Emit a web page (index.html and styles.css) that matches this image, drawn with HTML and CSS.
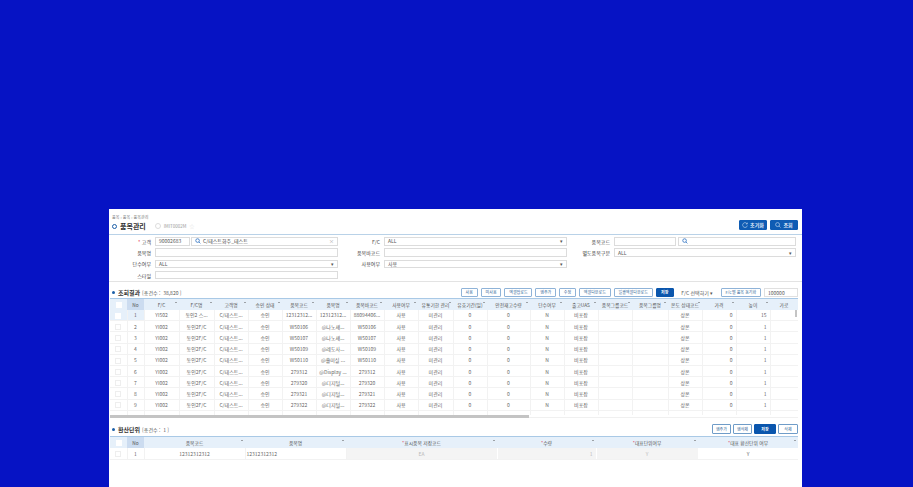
FILE: index.html
```html
<!DOCTYPE html>
<html lang="ko">
<head>
  <meta charset="UTF-8" />
  <title>품목관리</title>
  <link rel="stylesheet" href="styles.css">
</head>
<body>
  <main class="panel">

    <header class="page-head">
      <div>
        <div class="crumb">품목 › 품목 › 품목관리</div>
        <h1 class="page-title"><span class="ring"></span>품목관리<span class="clock"></span><span class="page-code">IMIT0002M</span><span class="star">☆</span></h1>
      </div>
      <div class="head-btns">
        <button class="btn-blue reset">
          <svg width="6" height="6" viewBox="0 0 10 10"><path d="M8.500 3A4 4 0 1 0 9 6M8.800 1v2.300H6.500" fill="none" stroke="#cfe0f5" stroke-width="1"/></svg>
          초기화
        </button>
        <button class="btn-blue">
          <svg width="6" height="6" viewBox="0 0 10 10"><circle cx="4.300" cy="4.300" r="3.300" fill="none" stroke="#cfe0f5" stroke-width="1"/><path d="M6.800 6.800L9.300 9.300" stroke="#cfe0f5" stroke-width="1"/></svg>
          조회
        </button>
      </div>
    </header>

    <section class="search">
      <div class="search-col">
        <div class="field">
          <label><em>*</em> 고객</label>
          <div class="split">
            <span class="input code">90002683</span>
            <span class="input grow">
              <svg width="6" height="6" viewBox="0 0 10 10"><circle cx="4.300" cy="4.300" r="3" fill="none" stroke="#2b6fc0" stroke-width="1.300"/><path d="M6.600 6.600L9 9" stroke="#2b6fc0" stroke-width="1.300"/></svg>
              <b>C/테스트화주_테스트</b><i class="clear">×</i>
            </span>
          </div>
        </div>
        <div class="field"><label>품목명</label><span class="input"></span></div>
        <div class="field"><label>단수여부</label><span class="input select">ALL</span></div>
        <div class="field"><label>스타일</label><span class="input"></span></div>
      </div>
      <div class="search-col mid">
        <div class="field"><label>F/C</label><span class="input select">ALL</span></div>
        <div class="field"><label>품목바코드</label><span class="input"></span></div>
        <div class="field"><label>사용여부</label><span class="input select">사용</span></div>
      </div>
      <div class="search-col last">
        <div class="field">
          <label>품목코드</label>
          <div class="split wide">
            <span class="input"></span>
            <span class="input">
              <svg width="6" height="6" viewBox="0 0 10 10"><circle cx="4.300" cy="4.300" r="3" fill="none" stroke="#2b6fc0" stroke-width="1.300"/><path d="M6.600 6.600L9 9" stroke="#2b6fc0" stroke-width="1.300"/></svg>
            </span>
          </div>
        </div>
        <div class="field"><label>별도품목구분</label><span class="input select">ALL</span></div>
      </div>
    </section>

    <div class="bar">
      <h2 class="bar-title"><span class="dot"></span>조회결과 <small>[총건수 : &nbsp;38,820 ]</small></h2>
      <div class="bar-btns">
        <button class="btn-sm">사용</button>
        <button class="btn-sm">미사용</button>
        <button class="btn-sm">엑셀업로드</button>
        <button class="btn-sm">행추가</button>
        <button class="btn-sm">수정</button>
        <button class="btn-sm">엑셀다운로드</button>
        <button class="btn-sm">일괄엑셀다운로드</button>
        <button class="btn-sm save">저장</button>
        <span class="fc-select">F/C 선택하기 ▾</span>
        <button class="btn-sm">F/C별 품목 동기화</button>
        <span class="limit">100000</span>
      </div>
    </div>

    <div class="grid-wrap main-grid">
      <table class="grid">
        <colgroup>
          <col class="w17"><col class="w17"><col class="w35"><col class="w35"><col class="w34"><col class="w34"><col class="w34"><col class="w34"><col class="w34"><col class="w34"><col class="w35"><col class="w34"><col class="w43"><col class="w34"><col class="w34"><col class="w34"><col class="w36"><col class="w34"><col class="w34"><col class="w34"><col class="w28">
        </colgroup>
        <thead>
          <tr><th class="chk"><i class="box"></i></th><th class="no">No</th><th class="s">F/C</th><th class="s">F/C명</th><th class="s">고객명</th><th class="s">승인 상태</th><th class="s">품목코드</th><th class="s">품목명</th><th class="s">품목바코드</th><th class="s">사용여부</th><th class="s">유통기한 관리</th><th class="s">유효기간(일)</th><th class="s">안전재고수량</th><th class="s">단수여부</th><th class="s">출고UAS</th><th class="s">품목그룹코드</th><th class="s">품목그룹명</th><th class="s">온도 상태코드</th><th class="s">가격</th><th class="s">높이</th><th>가로</th></tr>
        </thead>
        <tbody>
          <tr class="picked"><td><i class="box"></i></td><td>1</td><td>YI502</td><td>동인2 스...</td><td>C/테스트...</td><td>승인</td><td>12312312...</td><td>12312312...</td><td>88094406...</td><td>사용</td><td>미관리</td><td>0</td><td>0</td><td>N</td><td>비포장</td><td></td><td></td><td>상온</td><td class="num">0</td><td class="num">15</td><td></td></tr>
          <tr><td><i class="box"></i></td><td>2</td><td>YI002</td><td>동인2F/C</td><td>C/테스트...</td><td>승인</td><td>W50106</td><td>@나노섀...</td><td>W50106</td><td>사용</td><td>미관리</td><td>0</td><td>0</td><td>N</td><td>비포장</td><td></td><td></td><td>상온</td><td class="num">0</td><td class="num">1</td><td></td></tr>
          <tr><td><i class="box"></i></td><td>3</td><td>YI002</td><td>동인2F/C</td><td>C/테스트...</td><td>승인</td><td>W50107</td><td>@나노섀...</td><td>W50107</td><td>사용</td><td>미관리</td><td>0</td><td>0</td><td>N</td><td>비포장</td><td></td><td></td><td>상온</td><td class="num">0</td><td class="num">1</td><td></td></tr>
          <tr><td><i class="box"></i></td><td>4</td><td>YI002</td><td>동인2F/C</td><td>C/테스트...</td><td>승인</td><td>W50109</td><td>@레도사...</td><td>W50109</td><td>사용</td><td>미관리</td><td>0</td><td>0</td><td>N</td><td>비포장</td><td></td><td></td><td>상온</td><td class="num">0</td><td class="num">1</td><td></td></tr>
          <tr><td><i class="box"></i></td><td>5</td><td>YI002</td><td>동인2F/C</td><td>C/테스트...</td><td>승인</td><td>W50110</td><td>@홀미실 ...</td><td>W50110</td><td>사용</td><td>미관리</td><td>0</td><td>0</td><td>N</td><td>비포장</td><td></td><td></td><td>상온</td><td class="num">0</td><td class="num">1</td><td></td></tr>
          <tr><td><i class="box"></i></td><td>6</td><td>YI002</td><td>동인2F/C</td><td>C/테스트...</td><td>승인</td><td>279312</td><td>@Display ...</td><td>279312</td><td>사용</td><td>미관리</td><td>0</td><td>0</td><td>N</td><td>비포장</td><td></td><td></td><td>상온</td><td class="num">0</td><td class="num">1</td><td></td></tr>
          <tr><td><i class="box"></i></td><td>7</td><td>YI002</td><td>동인2F/C</td><td>C/테스트...</td><td>승인</td><td>279320</td><td>@디지털...</td><td>279320</td><td>사용</td><td>미관리</td><td>0</td><td>0</td><td>N</td><td>비포장</td><td></td><td></td><td>상온</td><td class="num">0</td><td class="num">1</td><td></td></tr>
          <tr><td><i class="box"></i></td><td>8</td><td>YI002</td><td>동인2F/C</td><td>C/테스트...</td><td>승인</td><td>279321</td><td>@디지털...</td><td>279321</td><td>사용</td><td>미관리</td><td>0</td><td>0</td><td>N</td><td>비포장</td><td></td><td></td><td>상온</td><td class="num">0</td><td class="num">1</td><td></td></tr>
          <tr><td><i class="box"></i></td><td>9</td><td>YI002</td><td>동인2F/C</td><td>C/테스트...</td><td>승인</td><td>279322</td><td>@디지털...</td><td>279322</td><td>사용</td><td>미관리</td><td>0</td><td>0</td><td>N</td><td>비포장</td><td></td><td></td><td>상온</td><td class="num">0</td><td class="num">1</td><td></td></tr>
          <tr><td></td><td></td><td></td><td></td><td></td><td></td><td></td><td></td><td></td><td></td><td></td><td></td><td></td><td></td><td></td><td></td><td></td><td></td><td></td><td></td><td></td></tr>
        </tbody>
      </table>
      <div class="vbar"></div>
      <div class="hbar"><span></span></div>
    </div>

    <div class="bar sub">
      <h2 class="bar-title"><span class="dot"></span>환산단위 <small>[총건수 : &nbsp;1 ]</small></h2>
      <div class="bar-btns">
        <button class="btn-sm dark">행추가</button>
        <button class="btn-sm dark">행삭제</button>
        <button class="btn-sm save big">저장</button>
        <button class="btn-sm dark wide">삭제</button>
      </div>
    </div>

    <div class="grid-wrap unit-grid">
      <table class="grid">
        <colgroup>
          <col class="w17"><col class="w17"><col class="w101"><col class="w101"><col class="w151"><col class="w99"><col class="w102"><col class="w100">
        </colgroup>
        <thead>
          <tr><th class="chk"><i class="box"></i></th><th class="no">No</th><th class="s">품목코드</th><th class="s">품목명</th><th class="s"><em>*</em>표시품목 저장코드</th><th class="s"><em>*</em>수량</th><th class="s"><em>*</em>대표단위여부</th><th class="s"><em>*</em>대표 환산단위 여부</th></tr>
        </thead>
        <tbody>
          <tr><td><i class="box"></i></td><td>1</td><td>12312312312</td><td class="left">12312312312</td><td class="off">EA</td><td class="off num">1</td><td class="off">Y</td><td>Y</td></tr>
        </tbody>
      </table>
    </div>

  </main>
</body>
</html>
```

FILE: styles.css
```css
* {
  box-sizing: border-box;
}

body {
  margin: 0;
  height: 487px;
  overflow: hidden;
  background-color: #0613c4;
  font-family: "Noto Sans CJK KR", "Noto Sans", sans-serif;
  color: #555;
  font-size: 5px;
}

.panel {
  width: 693px;
  height: 278px;
  margin: 209px 0 0 109px;
  background: #fff;
  overflow: hidden;
}

button {
  font-family: inherit;
  cursor: pointer;
}

em {
  color: #e0455a;
  font-style: normal;
}

/* 상단 타이틀 */
.page-head {
  height: 26px;
  padding: 6px 4px 0 3px;
  display: flex;
  justify-content: space-between;
  border-bottom: 1px solid #b9d2e8;
}

.crumb {
  font-size: 4px;
  line-height: 5px;
  color: #777;
}

.page-title {
  margin: 0;
  font-size: 7px;
  line-height: 12px;
  font-weight: 700;
  color: #333;
  display: flex;
  align-items: center;
}

.ring {
  width: 5px;
  height: 5px;
  margin-right: 3px;
  border: 1.500px solid #1c5fa8;
  border-radius: 50%;
}

.clock {
  width: 6px;
  height: 6px;
  margin: 0 3px 0 9px;
  border: 1px solid #ddd;
  border-radius: 50%;
}

.page-code {
  font-size: 4.500px;
  font-weight: 400;
  color: #999;
}

.star {
  margin-left: 3px;
  font-size: 5px;
  font-weight: 400;
  color: #e6e6e6;
}

.head-btns {
  display: flex;
  gap: 3px;
  margin-top: 5px;
}

.head-btns button {
  height: 9.500px;
  padding: 0;
  display: flex;
  align-items: center;
  justify-content: center;
  gap: 2px;
  font-size: 5px;
  font-weight: 700;
  border-radius: 1px;
}

.btn-blue {
  width: 28px;
  background: #0f5cb4;
  color: #e4eefa;
  border: 1px solid #0f5cb4;
}

/* 검색 영역 */
.search {
  height: 47px;
  padding: 2px 6px 0 0;
  display: flex;
  border-bottom: 1px solid #e3e3e3;
}

.search-col {
  width: 229px;
  display: flex;
  flex-direction: column;
  gap: 2.800px;
}

.search-col.last {
  flex: 1;
}

.field {
  display: flex;
  height: 8.500px;
  align-items: center;
}

.field label {
  width: 45px;
  margin-right: 1px;
  padding-right: 3px;
  text-align: right;
  font-size: 5px;
  color: #444;
  flex: none;
}

.search-col.mid label {
  width: 44px;
}

.search-col.mid .field {
  padding-left: 1px;
}

.search-col.last label {
  width: 46px;
}

.input {
  flex: 1;
  height: 8.500px;
  padding: 0 3px;
  border: 1px solid #dcdcdc;
  background: #fff;
  display: flex;
  align-items: center;
  gap: 2px;
  font-size: 5px;
  line-height: 6px;
  color: #555;
}

.input b {
  font-weight: 400;
  color: #444;
}

.split {
  flex: 1;
  display: flex;
  gap: 1px;
}

.split.wide {
  gap: 2px;
}

.code {
  flex: 0 0 35px;
}

.split.wide .input:first-child {
  flex: 0 0 62px;
}

.clear {
  margin-left: auto;
  font-style: normal;
  color: #999;
}

.select::after {
  content: "▾";
  margin-left: auto;
  font-size: 5px;
  color: #555;
}

/* 툴바 */
.bar {
  height: 16px;
  padding: 4px 4px 0 3px;
  display: flex;
  align-items: center;
  justify-content: space-between;
}

.bar.sub {
  height: 18px;
  padding-top: 4px;
}

.bar-title {
  margin: 0;
  font-size: 6px;
  font-weight: 700;
  color: #333;
  display: flex;
  align-items: center;
  gap: 2px;
}

.bar-title small {
  font-size: 5px;
  font-weight: 400;
  color: #555;
}

.dot {
  width: 3px;
  height: 3px;
  margin-right: 1px;
  background: #1c5fa8;
  border-radius: 50%;
}

.bar-btns {
  display: flex;
  align-items: center;
  gap: 3px;
}

.btn-sm {
  height: 9px;
  padding: 0 3.800px;
  background: #fff;
  border: 1px solid #8fb3d8;
  border-radius: 1px;
  font-size: 4px;
  line-height: 7px;
  color: #2e5f95;
}

.btn-sm.save {
  background: #0a56ad;
  border-color: #0a56ad;
  color: #fff;
  width: 18px;
  padding: 0;
  font-weight: 700;
}

.btn-sm.dark {
  height: 10px;
  padding: 0 3px;
  border-color: #6f9cc8;
}

.btn-sm.big {
  height: 10px;
  width: 22px;
}

.btn-sm.wide {
  width: 20px;
}

.bar.sub .bar-btns {
  gap: 2px;
}

.fc-select {
  width: 41px;
  font-size: 5px;
  color: #555;
  text-align: center;
}

.limit {
  width: 34px;
  height: 9px;
  padding-left: 3px;
  border: 1px solid #e0e0e0;
  font-size: 5px;
  line-height: 7px;
}

/* 그리드 */
.grid-wrap {
  margin-left: 1px;
  position: relative;
  overflow: hidden;
}

.main-grid {
  width: 688px;
  height: 120px;
}

.unit-grid {
  width: 688px;
  height: 40px;
}

.grid {
  table-layout: fixed;
  width: 688px;
  border-collapse: collapse;
  font-size: 5px;
  color: #666;
}

.w17 { width: 17px; }
.w28 { width: 28px; }
.w34 { width: 34px; }
.w35 { width: 35px; }
.w36 { width: 36px; }
.w43 { width: 43px; }
.w99 { width: 99px; }
.w100 { width: 100px; }
.w101 { width: 101px; }
.w102 { width: 102px; }
.w151 { width: 151px; }

.grid th {
  height: 11px;
  padding: 0;
  background: #e6f0fa;
  border-top: 1px solid #a9c9e6;
  font-weight: 400;
  color: #555;
  font-size: 4.800px;
  white-space: nowrap;
  overflow: hidden;
  position: relative;
}

.grid th.no {
  background: #ccdcf0;
}

.grid th.s::after {
  content: "";
  position: absolute;
  top: 3px;
  right: 2px;
  border: 1px solid transparent;
  border-bottom: 1.500px solid #555;
  border-top: 0;
}

.grid td {
  height: 11.200px;
  padding: 0;
  text-align: center;
  border-right: 1px solid #f2f2f2;
  border-bottom: 1px solid #f2f2f2;
  white-space: nowrap;
  overflow: hidden;
}

.unit-grid .grid td {
  height: 12px;
}

.grid td.num {
  text-align: right;
  padding-right: 3px;
}

.grid td.left {
  text-align: left;
  padding-left: 1px;
}

.grid td.off {
  background: #f4f4f4;
  color: #bbb;
  border-right-color: #fff;
}

.grid .picked td:first-child,
.grid .picked td:nth-child(2) {
  background: #e6f0fa;
}

.box {
  display: inline-block;
  width: 6px;
  height: 6px;
  border: 1px solid #eee;
  background: #fff;
  vertical-align: middle;
}

.chk .box,
.picked .box {
  border-color: #fff;
}

.vbar {
  position: absolute;
  top: 12px;
  right: 1px;
  width: 2px;
  height: 7px;
  background: #c4c4c4;
}

.hbar {
  position: absolute;
  left: 0;
  right: 0;
  bottom: 0;
  height: 3px;
  background: #fff;
  border-bottom: 1px solid #f0f0f0;
}

.hbar span {
  display: block;
  width: 419px;
  height: 3px;
  background: #c4c4c4;
}
```
